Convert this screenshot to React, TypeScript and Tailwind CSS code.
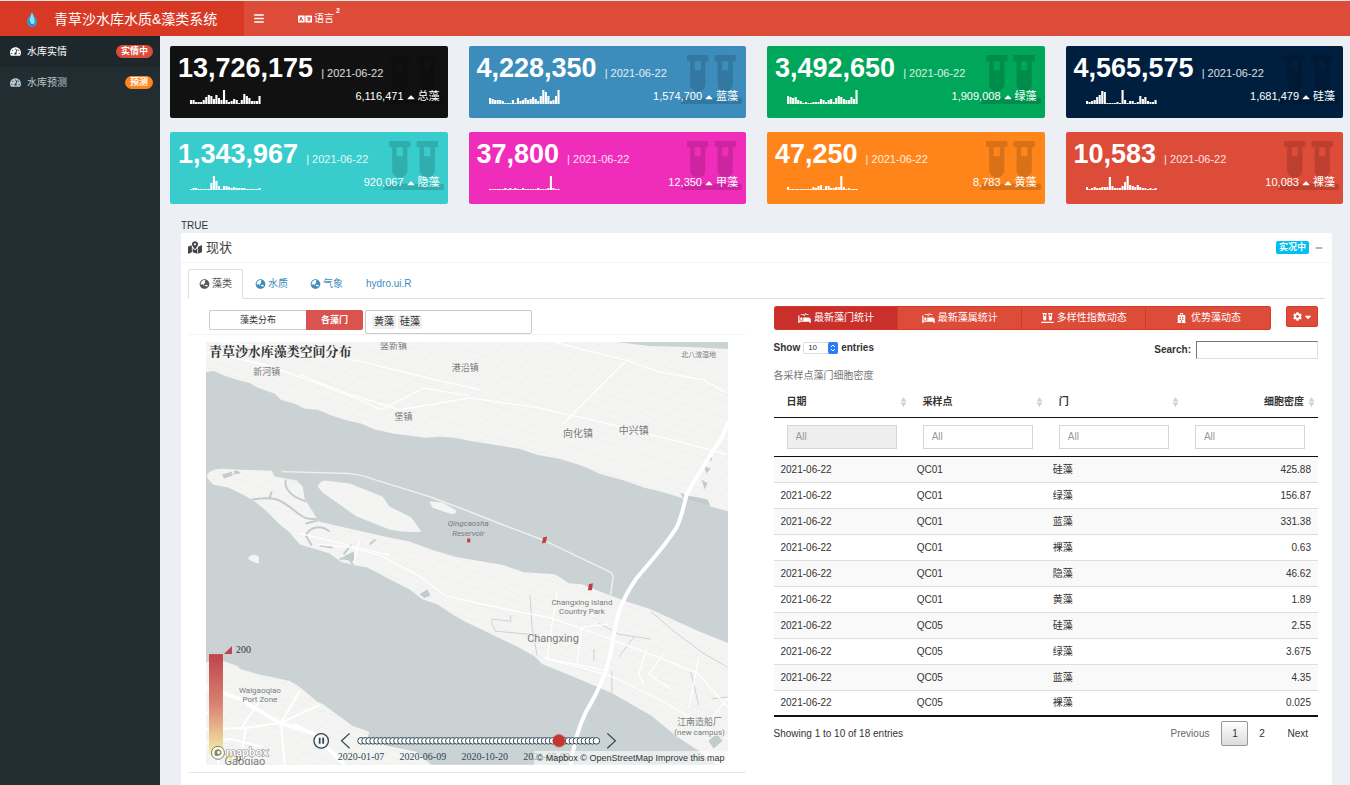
import React, { useState } from 'react';
import {
  FaBars,
  FaCaretDown,
  FaCaretUp,
  FaCog,
  FaGlobeAsia,
  FaHospital,
  FaLanguage,
  FaMapMarkedAlt,
  FaMinus,
  FaProcedures,
  FaTachometerAlt,
  FaVials,
} from 'react-icons/fa';

interface Stat {
  total: string;
  change: string;
  name: string;
  color: string;
  bars: number[];
}

const STATS: Stat[] = [
  { total: '13,726,175', change: '6,116,471', name: '总藻', color: 'bg-[#111111]', bars: [4, 4, 2, 2, 2, 4, 7, 9, 8, 5, 9, 6, 4, 14, 4, 2, 3, 5, 4, 1, 4, 10, 8, 6, 3, 3, 3, 8] },
  { total: '4,228,350', change: '1,574,700', name: '蓝藻', color: 'bg-[#3c8dbc]', bars: [6, 5, 4, 4, 4, 3, 1, 1, 0, 4, 0, 6, 3, 4, 6, 4, 5, 7, 5, 3, 8, 14, 12, 8, 3, 4, 8, 14] },
  { total: '3,492,650', change: '1,909,008', name: '绿藻', color: 'bg-[#00a65a]', bars: [8, 7, 6, 7, 4, 3, 1, 2, 0, 1, 2, 2, 2, 5, 4, 2, 4, 5, 2, 6, 8, 7, 5, 4, 4, 7, 5, 14] },
  { total: '4,565,575', change: '1,681,479', name: '硅藻', color: 'bg-[#001f3f]', bars: [3, 2, 3, 4, 7, 9, 13, 12, 1, 0, 1, 0, 2, 1, 14, 4, 0, 3, 3, 0, 2, 8, 5, 7, 3, 2, 2, 4] },
  { total: '1,343,967', change: '920,067', name: '隐藻', color: 'bg-[#39cccc]', bars: [1, 2, 2, 1, 1, 1, 1, 1, 7, 14, 9, 4, 1, 4, 4, 3, 2, 3, 2, 2, 2, 2, 1, 1, 1, 1, 1, 2] },
  { total: '37,800', change: '12,350', name: '甲藻', color: 'bg-[#f02cbb]', bars: [1, 1, 1, 1, 0, 1, 2, 1, 2, 1, 2, 1, 1, 2, 1, 1, 1, 1, 1, 2, 1, 1, 1, 2, 14, 2, 0, 1] },
  { total: '47,250', change: '8,783', name: '黄藻', color: 'bg-[#ff851b]', bars: [3, 1, 1, 1, 1, 0, 1, 1, 0, 1, 3, 2, 4, 5, 1, 4, 4, 2, 2, 3, 3, 14, 3, 1, 2, 1, 1, 1] },
  { total: '10,583', change: '10,083', name: '裸藻', color: 'bg-[#dd4b39]', bars: [3, 1, 2, 3, 2, 2, 3, 3, 3, 13, 4, 2, 2, 2, 4, 8, 14, 5, 4, 3, 5, 3, 2, 2, 1, 2, 1, 2] },
];

const ROWS: [string, string, string, string][] = [
  ['2021-06-22', 'QC01', '硅藻', '425.88'],
  ['2021-06-22', 'QC01', '绿藻', '156.87'],
  ['2021-06-22', 'QC01', '蓝藻', '331.38'],
  ['2021-06-22', 'QC01', '裸藻', '0.63'],
  ['2021-06-22', 'QC01', '隐藻', '46.62'],
  ['2021-06-22', 'QC01', '黄藻', '1.89'],
  ['2021-06-22', 'QC05', '硅藻', '2.55'],
  ['2021-06-22', 'QC05', '绿藻', '3.675'],
  ['2021-06-22', 'QC05', '蓝藻', '4.35'],
  ['2021-06-22', 'QC05', '裸藻', '0.025'],
];

const COLUMNS = ['日期', '采样点', '门', '细胞密度'];

const Sparkline: React.FC<{ bars: number[] }> = ({ bars }) => (
  <svg className="w-[71px] h-[15px] shrink-0" viewBox="0 0 70 15" preserveAspectRatio="none" fill="#fff">
    {bars.map((h, i) => (
      <rect key={i} x={i * 2.5} y={15 - Math.max(h, 1)} width={2.1} height={Math.max(h, 1)} />
    ))}
  </svg>
);

const StatCard: React.FC<{ stat: Stat }> = ({ stat }) => (
  <div className={`relative rounded-xs pt-[7px] pb-3.5 text-white ${stat.color}`}>
    <FaVials className="absolute right-1 top-[9px] w-[61px] h-[49px] text-black/15" />
    <p className="relative flex items-baseline gap-2 pl-2 h-[30px] text-[27px] leading-[30px] font-bold whitespace-nowrap">
      {stat.total}
      <span className="text-[11px] leading-4 font-normal text-white/85">| 2021-06-22</span>
    </p>
    <div className="relative mt-1.5 flex items-center justify-between pl-5 pr-2">
      <Sparkline bars={stat.bars} />
      <span className="flex items-center gap-[3px] text-[11px] leading-[15px] whitespace-nowrap">
        {stat.change}
        <FaCaretUp className="w-2 h-3" />
        {stat.name}
      </span>
    </div>
  </div>
);

const NORTH =
  'M206 342H618L650 346L690 347L730 349V512L705 505L685 499L665 493L645 488L625 481L600 474L590 469L580 465L560 459L538 455L520 449L495 445L470 441L455 438L440 437L425 438L412 436L395 434L376 430L362 424L345 420L330 415L318 410L305 409L295 404L281 400L275 394L258 388L250 383L238 380L225 376L214 371L206 372Z';
const CHANGXING =
  'M207 478C207 472 213 469 223 469L240 470L272 471L275 477L286 479L297 481L303 487L305 500L313 512L319 522L345 528L385 537L410 542L432 550L455 557L470 560L505 566L525 573L556 575L570 584L583 585L603 593L627 602L652 610L700 632L730 644V766H718L700 752L677 737L653 717L613 694L580 680L543 665L535 657L517 647L480 629L465 622L450 613L438 605L423 600L410 590L390 580L375 572L367 568L355 566L342 563L330 554L317 550L300 545L290 533L280 525L267 512L255 502L243 495L228 488L213 485Z';
const WAIGAOQIAO =
  'M206 663L223 662L238 667L240 670L262 676L290 682L300 688L318 703L323 705L338 716L353 727L370 733L368 738L387 747L402 750L417 753L433 767H206Z';
const BRIDGE =
  'M730 422C725 436 721 443 715 450C705 468 694 482 688 495C683 516 681 522 678 528C664 550 648 566 637 580C626 596 623 604 620 613C615 630 614 645 611 657C606 680 596 698 587 713C580 728 574 746 572 767';

const MINOR_ROADS = [
  'M206 352L270 366L330 388L400 410L470 398L540 408L610 424L680 442L728 455',
  'M220 342L320 352L420 376L480 390M300 374L382 410L424 388L470 396',
  'M555 342L626 360L660 372L705 380L728 393M626 362L564 424',
  'M318 545L350 548L380 556L400 566L425 580L445 596L478 604L552 619L612 640L660 658L700 675L729 708',
  'M300 534L345 545L390 556M360 540L354 565M558 592L548 660L610 676L660 700L729 740M545 659L606 671M578 665L583 628L610 625M648 650L640 675L645 685M665 655L650 675L672 690M700 660L690 710M729 700L700 735',
];

const CITY_ROADS = [
  'M206 688L240 700L280 724L312 734L345 766',
  'M206 730L245 729L281 724L300 692M281 724L285 766M223 698L206 715M246 730L240 766M260 702L242 728M281 724L320 706M312 734L295 725',
  'M206 745L230 740L262 748M218 766L222 742',
];

const CREEKS = [
  'M286 480C284 490 292 497 306 502M252 500C264 498 270 498 277 500C292 506 300 518 308 519L318 520M269 500L272 492M306 524L318 521',
  'M306 536C311 526 322 526 330 532M306 536L312 546M320 546L333 548M352 545L344 555M370 545L376 540M340 560L348 557L354 566',
];

const GREY_ROADS =
  'M531 596L533 628L538 656M492 620L512 622L511 616M492 622L496 632L540 636M635 638L620 658M600 624L620 635L652 640M652 612L675 632L706 655L729 668M595 650V662M613 672V694M692 672L700 706M713 700L729 698';

const PONDS =
  'M222 475L232 472L233 476L224 479ZM234 471L238 471L241 474L234 475ZM346 556L354 552L355 562L342 560ZM420 595L428 590L431 596L425 599ZM710 742L718 735L724 742L715 750ZM681 493L688 496L700 498L709 500L712 507L690 506ZM708 456L714 458L712 462ZM705 466L712 469L708 474ZM703 480L709 484L706 490Z';

const PLACES: { x: number; y: number; size: number; text: string; italic?: boolean }[] = [
  { x: 394, y: 349, size: 9, text: '竖新镇' },
  { x: 267, y: 375, size: 9, text: '新河镇' },
  { x: 466, y: 371, size: 9, text: '港沿镇' },
  { x: 404, y: 420, size: 9, text: '堡镇' },
  { x: 579, y: 437, size: 10, text: '向化镇' },
  { x: 635, y: 434, size: 10, text: '中兴镇' },
  { x: 700, y: 357, size: 7, text: '北八滧湿地' },
  { x: 469, y: 527, size: 8, text: 'Qingcaosha', italic: true },
  { x: 469, y: 537, size: 8, text: 'Reservoir', italic: true },
  { x: 583, y: 606, size: 8, text: 'Changxing Island' },
  { x: 583, y: 615, size: 8, text: 'Country Park' },
  { x: 554, y: 643, size: 11, text: 'Changxing' },
  { x: 260, y: 694, size: 8, text: 'Waigaoqiao' },
  { x: 260, y: 703, size: 8, text: 'Port Zone' },
  { x: 245, y: 766, size: 11, text: 'Gaoqiao' },
  { x: 701, y: 726, size: 9, text: '江南造船厂' },
  { x: 701, y: 736, size: 8, text: '(new campus)' },
];

const DATES = ['2020-01-07', '2020-06-09', '2020-10-20', '2021-03-09'];

const AlgaeMap: React.FC = () => (
  <div className="relative">
    <svg className="block w-full" viewBox="206 342 523 424" role="img" aria-label="青草沙水库藻类空间分布">
      <defs>
        <pattern id="fields" width="19" height="15" patternUnits="userSpaceOnUse" patternTransform="rotate(18) skewX(-42)">
          <path d="M0 0H19M0 0V15M0 8H19" stroke="#eaebea" strokeWidth="0.6" fill="none" />
        </pattern>
        <linearGradient id="density" x1="0" y1="0" x2="0" y2="1">
          <stop offset="0" stopColor="#bf444c" />
          <stop offset="0.5" stopColor="#d88273" />
          <stop offset="1" stopColor="#f6efa6" />
        </linearGradient>
        <clipPath id="land">
          <path d={NORTH} />
          <path d={CHANGXING} />
          <path d={WAIGAOQIAO} />
        </clipPath>
      </defs>
      <rect x="206" y="342" width="524" height="424" fill="#cad2d3" />
      <g fill="#f4f4f3">
        <path d={NORTH} />
        <path d={CHANGXING} />
        <path d={WAIGAOQIAO} />
        <path d="M318 487Q320 482 325 481L350 484L383 497L390 507L412 518L422 532Q408 534 390 530L357 517L323 493Z" />
        <path d="M430 502L443 503L457 511Q457 516 450 514L433 508Z" />
        <path d="M248 559Q252 553 259 557L259 564Q252 563 248 559Z" />
      </g>
      <g clipPath="url(#land)">
        <path d="M206 342H730V515H206ZM330 525H730V767H330ZM206 660H420V767H206Z" fill="url(#fields)" />
        <g fill="none" stroke="#c3cccd">
          {CREEKS.map((d) => <path key={d} d={d} strokeWidth="2" />)}
        </g>
        <path d={GREY_ROADS} fill="none" stroke="#ccd3d4" />
        <path d={PONDS} fill="#c3cccd" />
        <g fill="none" stroke="#fff">
          {MINOR_ROADS.map((d) => <path key={d} d={d} strokeWidth="1.3" />)}
          {CITY_ROADS.map((d, i) => <path key={d} d={d} strokeWidth={i === 0 ? 4 : 2} />)}
        </g>
      </g>
      <path d="M282 472L350 474Q362 475 375 480L430 497L470 512L503 525L545 541L610 572Q615 574 614 580L611 600" fill="none" stroke="#eef0ef" strokeWidth="1.5" />
      <path d={BRIDGE} fill="none" stroke="#fff" strokeWidth="4" />

      {/* Place names */}
      <g className="font-[Roboto,'Noto_Sans_CJK_SC',sans-serif]" textAnchor="middle" fill="#777c7c" stroke="#f4f4f3" strokeWidth="1.5" paintOrder="stroke">
        {PLACES.map((p) => (
          <text
            key={p.text}
            x={p.x}
            y={p.y}
            fontSize={p.size}
            fontStyle={p.italic ? 'italic' : undefined}
            stroke={p.italic ? 'none' : undefined}
          >
            {p.text}
          </text>
        ))}
      </g>
      <text x="209" y="356" fontSize="13" fontWeight="bold" fill="#333" className="font-['Noto_Serif_CJK_SC','Liberation_Serif','Noto_Sans_CJK_SC',serif]">
        青草沙水库藻类空间分布
      </text>

      {/* Sampling points */}
      <g fill="#c23d43">
        <rect x="468" y="539" width="3" height="4" />
        <path d="M544 538L548 537L547 543L543 544Z" />
        <path d="M590 585L594 584L593 591L589 591Z" />
      </g>
      <circle cx="282" cy="471" r="1.2" fill="#f0e47a" />

      {/* Density scale */}
      <rect x="209" y="655" width="14" height="100" fill="url(#density)" />
      <path d="M224 655L232 647V655Z" fill="#bf444c" />
      <path d="M224 755L232 755V763Z" fill="#f3e88c" />
      <g className="font-['Liberation_Serif',serif]" fontSize="10" fill="#333">
        <text x="236" y="654">200</text>
        <text x="236" y="762">0</text>
      </g>

      {/* Mapbox mark */}
      <circle cx="218" cy="754" r="6.5" fill="#fff" fillOpacity="0.8" stroke="#777" />
      <path d="M215 757Q213 751 218 750.5Q222 751 221.5 754.5Q220 758 215 757Z" fill="#8d8960" />
      <circle cx="218.7" cy="753.7" r="1.5" fill="#fff" />
      <text x="226" y="757" fontSize="12" fontWeight="bold" fill="#fff" stroke="#8b8b8b" strokeWidth="1.2" paintOrder="stroke" className="font-[Lato,sans-serif]">
        mapbox
      </text>

      {/* Timeline */}
      <g fill="none" stroke="#304654" strokeWidth="1.3">
        <circle cx="321.5" cy="742" r="7.3" />
        <path d="M320 739V745M323.5 739V745" strokeWidth="1.8" />
        <path d="M350 734.5L342 742L350 749.5M608.5 734.5L616.5 742L608.5 749.5" />
        <path d="M362 742H597" />
      </g>
      <g fill="#fff" stroke="#304654" strokeWidth="1">
        {Array.from({ length: 60 }, (_, i) => (
          <circle key={i} cx={361.5 + i * 4} cy="742" r="3.3" />
        ))}
      </g>
      <circle cx="560" cy="742" r="6" fill="#c23531" stroke="#c23531" strokeOpacity="0.4" strokeWidth="2" />
      <g className="font-['Liberation_Serif',serif]" fontSize="10" fill="#304654" textAnchor="middle">
        {DATES.map((d, i) => <text key={d} x={361.5 + i * 62} y="761">{d}</text>)}
      </g>
    </svg>
    <p className="absolute right-0 bottom-0 px-[3px] bg-white/60 text-[9px] leading-[14px] text-[#333]">
      <a href="#mapbox">© Mapbox</a> <a href="#osm">© OpenStreetMap</a> <a href="#improve">Improve this map</a>
    </p>
  </div>
);

const SortIcon: React.FC = () => (
  <svg className="w-[7px] h-2.5 shrink-0" viewBox="0 0 7 10" fill="#d2d2d2">
    <path d="M3.5 0L6.5 4.4H0.5ZM3.5 10L6.5 5.6H0.5Z" />
  </svg>
);

const REPORTS = [
  { label: '最新藻门统计', Icon: FaProcedures },
  { label: '最新藻属统计', Icon: FaProcedures },
  { label: '多样性指数动态', Icon: FaVials },
  { label: '优势藻动态', Icon: FaHospital },
];

const DensityTable: React.FC = () => {
  const [report, setReport] = useState(0);

  return (
    <div className="pl-[17px] pr-[7px] pt-[7px]">
      <div className="flex items-start gap-[15px]">
        <div className="grid grid-cols-4 flex-1 h-6 rounded-xs overflow-hidden border border-[#d73925]">
          {REPORTS.map(({ label, Icon }, i) => (
            <button
              key={label}
              onClick={() => setReport(i)}
              className={`flex items-center justify-center gap-[3px] text-white border-r last:border-r-0 border-[#d73925] ${report === i ? 'bg-[#c9302c]' : 'bg-[#dd4b39]'}`}
            >
              <Icon className="w-[13px] h-2.5" />
              {label}
            </button>
          ))}
        </div>
        <button aria-label="设置" className="flex items-center justify-center gap-0.5 w-8 h-[21px] rounded-xs bg-[#dd4b39] border border-[#d73925] text-white">
          <FaCog className="w-[9px] h-[9px]" />
          <FaCaretDown className="w-2 h-2.5" />
        </button>
      </div>

      <div className="mt-[11px] flex items-start justify-between font-bold">
        <label className="flex items-center gap-[3px]">
          Show
          <span className="relative">
            <select className="block appearance-none w-[35px] h-3 pl-1 rounded-xs border border-[#ddd] bg-white text-[8px] leading-[10px] font-normal">
              <option>10</option>
              <option>25</option>
              <option>50</option>
            </select>
            <svg className="absolute right-0 top-0 w-2.5 h-3 pointer-events-none" viewBox="0 0 10 12">
              <rect width="10" height="12" rx="2" fill="#2a7df6" />
              <path d="M3 5L5 3L7 5M3 7L5 9L7 7" fill="none" stroke="#fff" />
            </svg>
          </span>
          entries
        </label>
        <label className="flex items-center gap-[5px]">
          Search:
          <input type="text" className="w-[122px] h-[18px] px-1 border border-t-[#767676] border-l-[#767676] border-r-[#ddd] border-b-[#ddd] bg-white font-normal" />
        </label>
      </div>

      <table className="mt-2.5 w-full table-fixed border-collapse">
        <caption className="text-left text-[#777]">各采样点藻门细胞密度</caption>
        <thead>
          <tr className="h-[34px] border-b border-[#111]">
            {COLUMNS.map((c, i) => (
              <th key={c} className="pt-1 pl-[13px] pr-[3px] font-bold">
                <span className={`flex items-center ${i === 3 ? 'justify-end gap-1' : 'justify-between'}`}>
                  {c}
                  <SortIcon />
                </span>
              </th>
            ))}
          </tr>
          <tr className="h-[39px] border-b border-[#111]">
            {COLUMNS.map((c, i) => (
              <td key={c} className="px-[13px]">
                <input
                  type="text"
                  placeholder="All"
                  aria-label={c}
                  disabled={i === 0}
                  className="block w-full h-6 px-2 border border-[#d2d6de] bg-white placeholder:text-[#999] disabled:bg-[#eee]"
                />
              </td>
            ))}
          </tr>
        </thead>
        <tbody className="border-b-2 border-[#111]">
          {ROWS.map((row, i) => (
            <tr key={i} className="h-[26px] border-t border-[#ddd] first:border-[#111] odd:bg-[#f9f9f9]">
              {row.map((cell, j) => (
                <td key={j} className={`px-[7px] pt-px ${j === 3 ? 'text-right' : ''}`}>{cell}</td>
              ))}
            </tr>
          ))}
        </tbody>
      </table>

      <div className="mt-1 flex items-center justify-between">
        <p>Showing 1 to 10 of 18 entries</p>
        <nav className="flex items-center">
          <button disabled className="px-3 text-[#666]">Previous</button>
          <button className="w-[27px] h-[25px] rounded-xs border border-[#979797] bg-linear-to-b from-white to-[#dcdcdc]">1</button>
          <button className="w-[27px] h-[25px]">2</button>
          <button className="pl-3 pr-2.5">Next</button>
        </nav>
      </div>
    </div>
  );
};

const TABS = ['藻类', '水质', '气象'];

const App: React.FC = () => {
  const [mode, setMode] = useState('phylum');

  return (
    <div className="min-h-screen flex flex-col bg-[#ecf0f5] text-[10px] leading-[14px] text-[#333] font-['Liberation_Sans','Noto_Sans_CJK_SC',sans-serif]">
      <header className="flex h-9 border-t border-[#e8e8e8] bg-[#dd4b39] text-white">
        <a href="#home" className="flex items-center w-[244px] pl-[26px] bg-[#d73925] text-[14px] leading-5 whitespace-nowrap">
          <svg className="w-3 h-4 mr-4" viewBox="0 0 12 16">
            <path d="M6 0.5C7 4 11 7.500 11 11A5 4.800 0 0 1 1 11C1 7.500 5 4 6 0.500Z" fill="#2a9fe0" />
            <path d="M6 1C6.500 4 9 8 8.500 11C8 14 4 14 3.500 11C3.500 8 5.500 4 6 1Z" fill="#9bdcfa" />
            <path d="M3 10Q4 14 7 14" stroke="#0c6fb5" fill="none" />
          </svg>
          青草沙水库水质&藻类系统
        </a>
        <button aria-label="菜单" className="px-2.5">
          <FaBars className="w-2.5 h-[11px]" />
        </button>
        <button className="relative ml-3.5 px-2.5 flex items-center gap-0.5">
          <FaLanguage className="w-[14px] h-3" />
          语言
          <span className="absolute right-1 top-1 text-[7px] leading-3 font-bold">2</span>
        </button>
      </header>

      <div className="flex flex-1">
        <aside className="w-40 shrink-0 bg-[#222d32]">
          <a href="#now" className="flex items-center h-[31px] pl-2.5 pr-[7px] bg-[#1e282c] text-white">
            <FaTachometerAlt className="w-[11px] h-[11px] mr-1.5" />
            水库实情
            <span className="ml-auto px-[5px] rounded-full bg-[#dd4b39] text-[9px] leading-[13px] font-bold">实情中</span>
          </a>
          <a href="#forecast" className="flex items-center h-[31px] pl-2.5 pr-[7px] text-[#b8c7ce]">
            <FaTachometerAlt className="w-[11px] h-[11px] mr-1.5" />
            水库预测
            <span className="ml-auto px-[5px] rounded-full bg-[#ff851b] text-[9px] leading-[13px] font-bold text-white">预测</span>
          </a>
        </aside>

        <main className="flex-1 min-w-0 flex flex-col pt-2.5">
          <div className="grid grid-cols-4 gap-x-[21px] gap-y-3.5 pl-2.5 pr-[7px]">
            {STATS.map((s) => <StatCard key={s.name} stat={s} />)}
          </div>

          <div className="flex-1 flex flex-col ml-[21px] mr-[18px] mt-[15px]">
            <p>TRUE</p>
            <section className="flex-1 bg-white rounded-t-xs">
              <div className="flex items-center h-[30px] px-[7px] border-b border-[#f4f4f4]">
                <h3 className="flex items-center gap-1 text-[13px] leading-5 text-[#444]">
                  <FaMapMarkedAlt className="w-3.5 h-[13px]" />
                  现状
                </h3>
                <span className="ml-auto px-[3px] rounded-xs bg-[#00c0ef] text-[9px] leading-[13px] font-bold text-white">实况中</span>
                <button aria-label="折叠" className="ml-1.5 mr-0.5 text-[#97a0b3]">
                  <FaMinus className="w-2 h-2" />
                </button>
              </div>

              <div className="px-[7px] pt-1.5">
                <nav className="flex h-[30px] border-b border-[#ddd]">
                  {TABS.map((t, i) => (
                    <a
                      key={t}
                      href="#tab"
                      className={`flex items-center gap-0.5 -mb-px px-2.5 border rounded-t-xs ${i === 0 ? 'mr-px text-[#555] bg-white border-[#ddd] border-b-white' : 'border-transparent text-[#3c8dbc]'}`}
                    >
                      <FaGlobeAsia className="w-[11px] h-2.5" />
                      {t}
                    </a>
                  ))}
                  <a href="#hydro" className="flex items-center px-3 text-[#3c8dbc]">hydro.ui.R</a>
                </nav>

                <div className="grid grid-cols-2">
                  <div className="mr-[11px] border-b border-[#e8e8e8]">
                    <div className="flex items-start h-9 pt-[11px] pl-[21px] border-b border-[#f4f4f4]">
                      <div className="flex h-5 text-[9px]">
                        <button onClick={() => setMode('all')} className="w-[97px] rounded-l-xs border border-r-0 border-[#ccc] bg-white">
                          藻类分布
                        </button>
                        <button
                          onClick={() => setMode('phylum')}
                          className={`w-[57px] rounded-r-xs font-bold ${mode === 'phylum' ? 'bg-[#d9534f] text-white' : 'bg-white border border-[#ccc]'}`}
                        >
                          各藻门
                        </button>
                      </div>
                      <div className="ml-0.5 flex items-center gap-0.5 w-[167px] h-6 px-1.5 rounded-xs border border-[#ccc] bg-white">
                        <span className="px-0.5 rounded-xs bg-[#efefef]">黄藻</span>
                        <span className="px-0.5 rounded-xs bg-[#efefef]">硅藻</span>
                        <input type="text" aria-label="藻门" className="flex-1 min-w-0 outline-none" />
                      </div>
                    </div>
                    <div className="px-[18px] py-[7px]">
                      <AlgaeMap />
                    </div>
                  </div>
                  <DensityTable />
                </div>
              </div>
            </section>
          </div>
        </main>
      </div>
    </div>
  );
};

export default App;
